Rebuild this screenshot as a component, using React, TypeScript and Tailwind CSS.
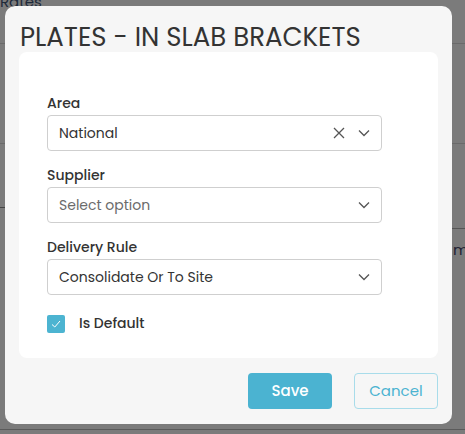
import React from "react";

const font = { fontFamily: "Poppins, Inter, 'Noto Sans', sans-serif" };

function Chevron() {
  return (
    <svg width="14" height="14" viewBox="0 0 14 14" fill="none" stroke="#555" strokeWidth="1.3">
      <path d="M2 4.5 L7 9.5 L12 4.5" />
    </svg>
  );
}

function XIcon() {
  return (
    <svg width="14" height="14" viewBox="0 0 14 14" fill="none" stroke="#555" strokeWidth="1.3">
      <path d="M2 2 L12 12 M12 2 L2 12" />
    </svg>
  );
}

function Field({ label, value, placeholder, clearable }: { label: string; value?: string; placeholder?: string; clearable?: boolean }) {
  return (
    <div className="flex flex-col">
      <label className="text-[14px] font-medium text-[#333] leading-[20px] mb-[2px]">{label}</label>
      <div className="h-[36px] w-[335px] rounded-[4px] border border-[#cfcfcf] bg-white flex items-center pl-[11px] pr-[10px]">
        <span className={"flex-1 text-[14px] " + (value ? "text-[#333]" : "text-[#6b6b6b]")}>{value ?? placeholder}</span>
        {clearable && (
          <span className="mr-[11px] flex items-center">
            <XIcon />
          </span>
        )}
        <Chevron />
      </div>
    </div>
  );
}

export default function App() {
  return (
    <div className="relative w-[465px] h-[434px] overflow-hidden bg-[#7b7b7b]" style={font}>
      {/* dimmed background page fragments */}
      <div className="absolute inset-0 text-[#1e2a3a]">
        <div className="absolute left-[0px] top-[-9px] text-[15px]">Rates</div>
        <div className="absolute left-0 right-0 top-[43px] h-px bg-[#6a6a6a]" />
        <div className="absolute left-0 right-0 top-[143px] h-px bg-[#6a6a6a]" />
        <div className="absolute left-0 w-[8px] top-[207px] h-px bg-[#444]" />
        <div className="absolute left-[452px] right-0 top-[228px] h-px bg-[#555]" />
        <div className="absolute left-[453px] top-[239px] text-[15px] text-[#223]">m</div>
        <div className="absolute left-0 right-0 top-[429px] h-px bg-[#5a5a5a]" />
      </div>

      {/* modal */}
      <div className="absolute left-[5px] top-[6px] w-[447px] h-[418px] rounded-[10px] bg-[#f6f6f6] flex flex-col px-[14px]">
        <h1 className="text-[26px] font-normal text-[#333] leading-[30px] mt-[16px] ml-[1px]">PLATES - IN SLAB BRACKETS</h1>
        <div className="mt-[0px] h-[306px] rounded-[8px] bg-white pl-[28px] pt-[41px] flex flex-col">
          <div className="flex flex-col gap-[14px]">
            <Field label="Area" value="National" clearable />
            <Field label="Supplier" placeholder="Select option" />
            <Field label="Delivery Rule" value="Consolidate Or To Site" />
          </div>
          <div className="flex items-center mt-[18px]">
            <span className="w-[18px] h-[18px] rounded-[2px] bg-[#4cb4d1] flex items-center justify-center">
              <svg width="12" height="12" viewBox="0 0 12 12" fill="none" stroke="white" strokeWidth="1">
                <path d="M2 6.5 L4.8 9 L10 3" />
              </svg>
            </span>
            <span className="ml-[14px] text-[14px] font-medium text-[#333]">Is Default</span>
          </div>
        </div>
        <div className="flex justify-end gap-[22px] mt-[15px]">
          <button className="h-[36px] w-[84px] rounded-[4px] bg-[#4bb3d1] text-white text-[15px] font-medium">Save</button>
          <button className="h-[36px] w-[84px] rounded-[4px] border border-[#a8dcea] text-[#4bb3d1] text-[15px]">Cancel</button>
        </div>
      </div>
    </div>
  );
}
